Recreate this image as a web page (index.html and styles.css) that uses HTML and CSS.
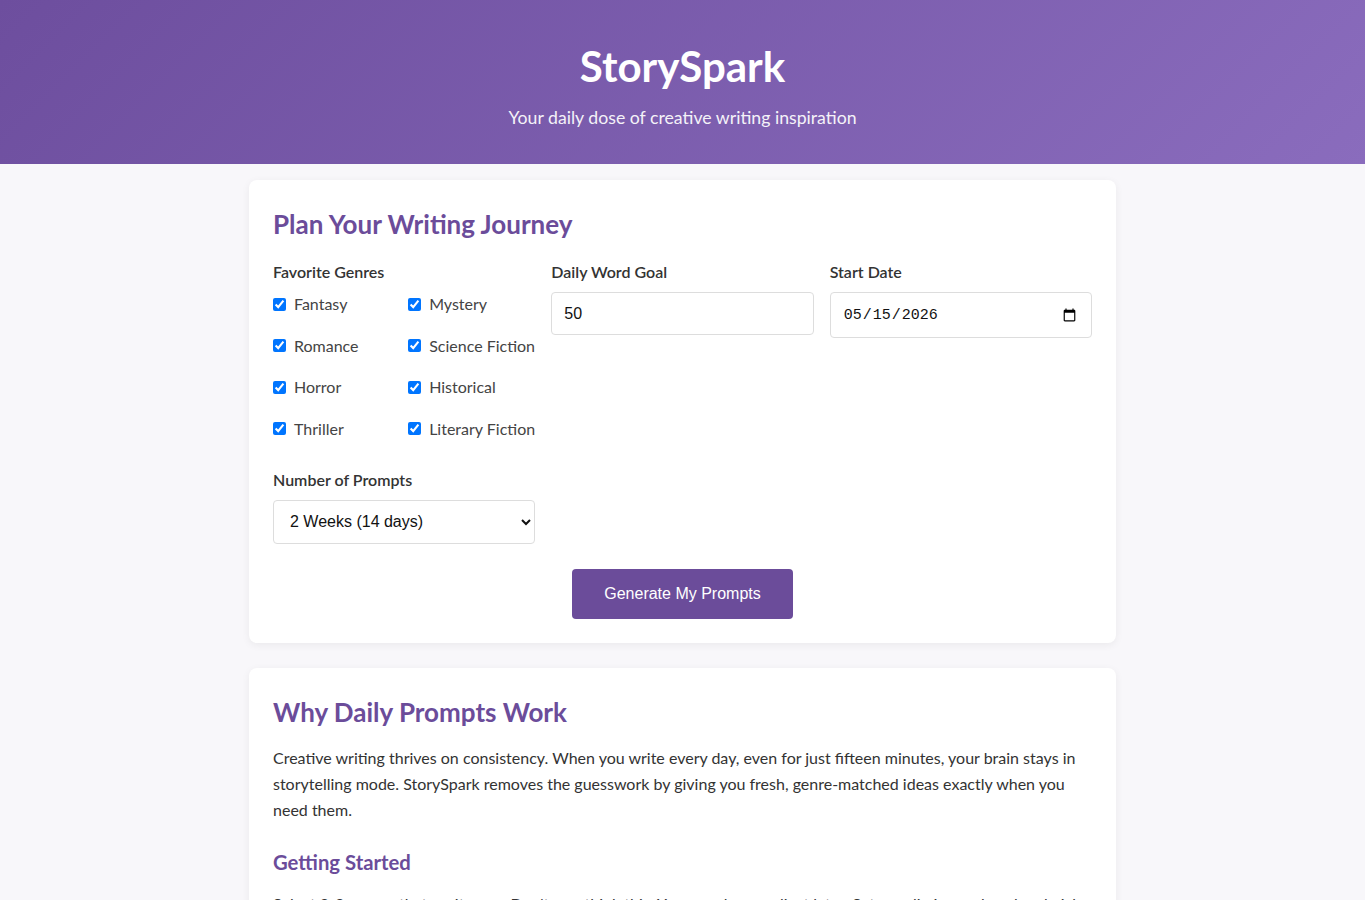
FILE: index.html
```html
<!DOCTYPE html>
<html lang="en">
  <head>
    <meta charset="UTF-8" />
    <meta name="viewport" content="width=device-width, initial-scale=1.0" />
    <title>StorySpark - Daily Writing Prompts</title>
    <link rel="stylesheet" href="styles.css">
  </head>

  <body>
    <header class="hero">
      <h1>StorySpark</h1>
      <p>Your daily dose of creative writing inspiration</p>
    </header>

    <main class="container">
      <section class="card">
        <h2>Plan Your Writing Journey</h2>

        <form class="planner" onsubmit="return false;">
          <div class="form-grid">
            <div class="field">
              <span class="field-label">Favorite Genres</span>
              <div class="genres">
                <label class="genre"><input type="checkbox" checked /> Fantasy</label>
                <label class="genre"><input type="checkbox" checked /> Mystery</label>
                <label class="genre"><input type="checkbox" checked /> Romance</label>
                <label class="genre"><input type="checkbox" checked /> Science Fiction</label>
                <label class="genre"><input type="checkbox" checked /> Horror</label>
                <label class="genre"><input type="checkbox" checked /> Historical</label>
                <label class="genre"><input type="checkbox" checked /> Thriller</label>
                <label class="genre"><input type="checkbox" checked /> Literary Fiction</label>
              </div>
            </div>

            <div class="field">
              <label class="field-label" for="word-goal">Daily Word Goal</label>
              <input type="number" id="word-goal" value="50" />
            </div>

            <div class="field">
              <label class="field-label" for="start-date">Start Date</label>
              <input type="date" id="start-date" value="2026-05-15" />
            </div>

            <div class="field">
              <label class="field-label" for="prompt-count">Number of Prompts</label>
              <select id="prompt-count">
                <option>1 Week (7 days)</option>
                <option selected>2 Weeks (14 days)</option>
                <option>1 Month (30 days)</option>
              </select>
            </div>
          </div>

          <div class="actions">
            <button type="submit" class="btn">Generate My Prompts</button>
          </div>
        </form>
      </section>

      <section class="card">
        <h2>Why Daily Prompts Work</h2>
        <p>
          Creative writing thrives on consistency. When you write every day, even for just fifteen minutes, your brain stays in
          storytelling mode. StorySpark removes the guesswork by giving you fresh, genre-matched ideas exactly when you
          need them.
        </p>

        <h3>Getting Started</h3>
        <p>
          Select 2-3 genres that excite you. Don't overthink this. You can always adjust later. Set a realistic word goal and pick
          a start date that gives you a fresh beginning.
        </p>
      </section>
    </main>
  </body>
</html>
```

FILE: styles.css
```css
* {
  box-sizing: border-box;
}

body {
  margin: 0;
  font-family: "Segoe UI", Lato, sans-serif;
  background-color: #f8f7fa;
  color: #333;
}

.hero {
  background: linear-gradient(135deg, #6d4e9e 0%, #8a6cbd 100%);
  color: white;
  text-align: center;
  padding: 40px 20px 34px;
}

.hero h1 {
  margin: 0 0 14px;
  font-size: 42px;
  line-height: 52px;
}

.hero p {
  margin: 0;
  font-size: 17.7px;
  line-height: 24px;
  opacity: 0.92;
}

.container {
  max-width: 867px;
  margin: 16px auto 0;
}

.card {
  background: white;
  border-radius: 8px;
  box-shadow: 0 2px 8px rgba(0, 0, 0, 0.06);
  padding: 24px;
  margin-bottom: 25px;
}

.card h2 {
  color: #6b4c9a;
  font-size: 26px;
  line-height: 32px;
  margin: 4px 0 17px;
}

.planner {
  margin-top: 22px;
}

.card h3 {
  color: #6b4c9a;
  font-size: 20.3px;
  line-height: 26px;
  margin: 26px 0 16px;
}

.card p {
  font-size: 16px;
  line-height: 26px;
  color: #333;
  margin: 0;
}

.form-grid {
  display: grid;
  grid-template-columns: repeat(3, 1fr);
  gap: 13px 16px;
}

.field-label {
  display: block;
  font-size: 16px;
  font-weight: 600;
  line-height: 20px;
  margin-bottom: 10px;
  color: #333;
}

.genres {
  display: grid;
  grid-template-columns: 1fr 1fr;
  column-gap: 8px;
  row-gap: 1.5px;
  margin-top: 4px;
}

.genre {
  display: flex;
  align-items: center;
  gap: 8px;
  font-size: 16px;
  line-height: 24px;
  padding: 8px 0;
  color: #444;
  margin-top: -8px;
  margin-bottom: 8px;
}

.genre input {
  margin: 0;
  width: 13px;
  height: 13px;
}

.field input[type="number"],
.field input[type="date"],
.field select {
  width: 100%;
  height: 43px;
  padding: 0 12px;
  border: 1px solid #ddd;
  border-radius: 4px;
  font-size: 16px;
  font-family: "Liberation Sans", Arial, sans-serif;
  background: white;
  color: #111;
}

.field input[type="date"] {
  font-family: "Liberation Mono", monospace;
  font-size: 15px;
  height: 46px;
}

.field select {
  height: 44px;
  padding: 0 12px;
}

.actions {
  text-align: center;
  margin-top: 25px;
}

.btn {
  background-color: #6b4c9a;
  color: white;
  border: none;
  border-radius: 4px;
  padding: 16px 32px;
  font-size: 16px;
  font-family: "Liberation Sans", Arial, sans-serif;
  cursor: pointer;
}
```
